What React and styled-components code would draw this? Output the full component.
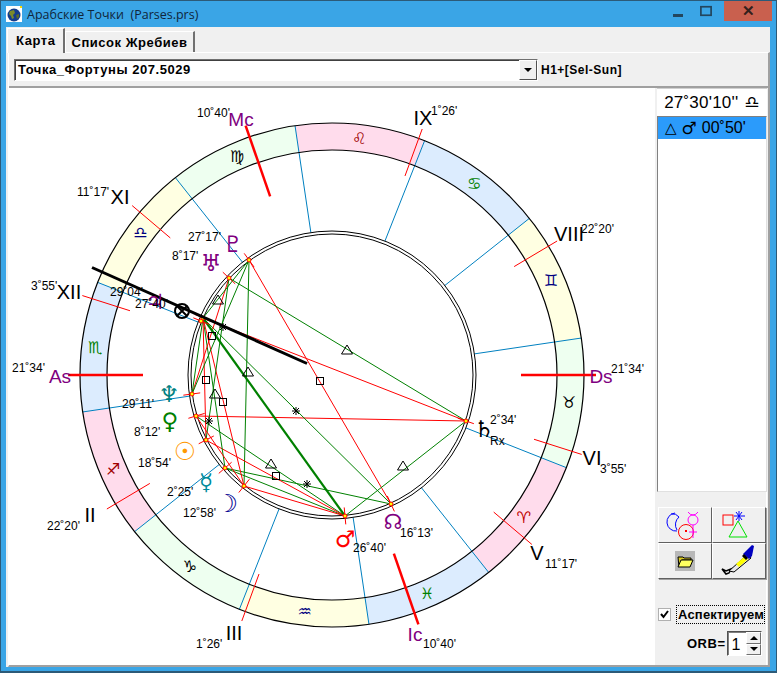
import React from "react";
import styled, { createGlobalStyle } from "styled-components";

const CX = 332;
const CY = 376;
const R_OUT = 252;
const R_IN = 225;
const ASC = 231.567;

const polar = (r, deg) => {
  const a = (deg * Math.PI) / 180;
  return [CX + r * Math.cos(a), CY - r * Math.sin(a)];
};
const screenAngle = (lon) => lon - ASC + 180;

const SIGNS = [
  ["♈", "#c00000", "#ffdcec"],
  ["♉", "#000000", "#eefff0"],
  ["♊", "#000080", "#ffffe2"],
  ["♋", "#008000", "#dcecfe"],
  ["♌", "#a00000", "#ffdcec"],
  ["♍", "#000000", "#eefff0"],
  ["♎", "#000080", "#ffffe2"],
  ["♏", "#008000", "#dcecfe"],
  ["♐", "#a00000", "#ffdcec"],
  ["♑", "#000000", "#eefff0"],
  ["♒", "#000080", "#ffffe2"],
  ["♓", "#008000", "#dcecfe"],
];

const CUSPS = [
  { lon: 231.567, thick: true },
  { lon: 262.33 },
  { lon: 301.43 },
  { lon: 340.67, thick: true },
  { lon: 11.28 },
  { lon: 33.92 },
  { lon: 51.567, thick: true },
  { lon: 82.33 },
  { lon: 121.43 },
  { lon: 160.67, thick: true },
  { lon: 191.28 },
  { lon: 213.92 },
];

const HOUSE_LABELS = [
  ["Mc", 241, 127, true],
  ["IX", 423, 126],
  ["VIII", 569, 242],
  ["Ds", 601, 384, true],
  ["VI", 592, 466],
  ["V", 537, 561],
  ["Ic", 415, 642, true],
  ["III", 234, 641],
  ["II", 90, 523],
  ["As", 60, 384, true],
  ["XII", 69, 300],
  ["XI", 120, 205],
];

const DEGREE_LABELS = [
  ["10˚40'", 197, 118],
  ["1˚26'", 431, 116],
  ["22˚20'", 581, 234],
  ["21˚34'", 611, 374],
  ["3˚55'", 600, 474],
  ["11˚17'", 545, 569],
  ["10˚40'", 423, 649],
  ["1˚26'", 196, 649],
  ["22˚20'", 47, 531],
  ["21˚34'", 12, 373],
  ["3˚55'", 31, 291],
  ["11˚17'", 77, 197],
  ["27˚17'", 188, 242],
  ["8˚17'", 172, 261],
  ["29˚04'", 110, 297],
  ["27˚40'", 135, 309],
  ["29˚11'", 122, 409],
  ["8˚12'", 134, 437],
  ["18˚54'", 138, 468],
  ["2˚25'", 167, 497],
  ["12˚58'", 183, 518],
  ["26˚40'", 353, 553],
  ["16˚13'", 400, 538],
  ["2˚34'", 490, 425],
];

const P = {
  pluto: [249, 261],
  uranus: [229, 279],
  jupiter: [201, 322],
  fortune: [203, 319],
  neptune: [192, 395],
  venus: [196, 417],
  sun: [206, 441],
  mercury: [225, 469],
  moon: [244, 487],
  mars: [345, 517],
  node: [391, 505],
  saturn: [466, 422],
};

const PLANETS = [
  ["♇", 233, 253, "#800080", 23],
  ["♅", 211, 272, "#800080", 23],
  ["♃", 155, 310, "#800080", 21],
  ["♆", 169, 403, "#008080", 23],
  ["♀", 170, 430, "#008000", 23],
  ["☉", 185, 461, "#ff9900", 25],
  ["☿", 206, 491, "#008b9b", 23],
  ["☽", 227, 513, "#000090", 25],
  ["♂", 345, 548, "#ff0000", 23],
  ["☊", 393, 530, "#800080", 21],
  ["♄", 484, 438, "#000000", 23],
];

const ASPECTS = [
  ["pluto", "node", "red"],
  ["uranus", "saturn", "green"],
  ["fortune", "saturn", "red"],
  ["venus", "saturn", "red"],
  ["fortune", "node", "green"],
  ["mars", "saturn", "green"],
  ["pluto", "moon", "green"],
  ["mercury", "node", "green"],
  ["mercury", "mars", "green"],
  ["venus", "mars", "green"],
  ["sun", "mars", "red"],
  ["fortune", "mercury", "green"],
  ["fortune", "moon", "red"],
  ["fortune", "sun", "red"],
  ["uranus", "neptune", "red"],
  ["pluto", "neptune", "green"],
  ["uranus", "sun", "green"],
  ["pluto", "fortune", "green"],
  ["venus", "moon", "red"],
  ["neptune", "fortune", "green"],
  ["moon", "mars", "red"],
];

const TRINES = [[218, 301], [347, 351], [403, 467], [248, 373], [271, 465], [215, 395]];
const SQUARES = [[320, 382], [212, 337], [206, 381], [223, 403], [276, 477]];
const STARS = [[296, 412], [307, 485], [223, 328], [209, 422]];

const GlobalStyle = createGlobalStyle`
  html, body {
    margin: 0;
    padding: 0;
    background: #fff;
    font-family: "Liberation Sans", Arial, sans-serif;
  }
`;

const Win = styled.div`
  box-sizing: border-box;
  width: 777px;
  height: 673px;
  display: flex;
  flex-direction: column;
  background: #3aa5e6;
  border: 1px solid #2c5a78;
  border-bottom-width: 2px;
`;

const TitleBar = styled.div`
  height: 26px;
  flex: none;
  display: flex;
  align-items: center;
  padding: 0 4px 0 5px;
  font: 12.5px "Open Sans", sans-serif;
  color: #10253a;
`;

const TitleText = styled.span`
  margin-left: 5px;
  flex: 1;
  white-space: pre;
`;

const CaptionBtn = styled.div`
  width: 28px;
  height: 20px;
  margin-top: -6px;
  display: flex;
  align-items: center;
  justify-content: center;
`;

const CloseBtn = styled(CaptionBtn)`
  width: 48px;
  margin-left: 4px;
  background: #c9604e;
  color: #33201c;
  font: bold 15px "Liberation Sans", sans-serif;
`;

const MinBar = styled.div`
  width: 10px;
  height: 3px;
  margin-top: 8px;
  background: #23465e;
`;

const MaxBox = styled.div`
  width: 10px;
  height: 8px;
  border: 2px solid #23465e;
  box-sizing: content-box;
  transform: scale(0.85);
`;

const Client = styled.div`
  flex: 1;
  min-height: 0;
  margin: 0 6px 4px 5px;
  background: #f0f0f0;
  display: flex;
  flex-direction: column;
`;

const TabStrip = styled.div`
  height: 25px;
  flex: none;
  display: flex;
  align-items: flex-end;
  padding-left: 1px;
`;

const Tab = styled.div`
  box-sizing: border-box;
  height: ${(p) => (p.$active ? "25px" : "21px")};
  margin-bottom: ${(p) => (p.$active ? "-1px" : "0")};
  padding: ${(p) => (p.$active ? "4px 8px 0 8px" : "3px 5px 0 5px")};
  background: #f0f0f0;
  border-top: 1px solid #fff;
  border-left: 1px solid #fff;
  border-right: 2px solid #707070;
  font: bold 13px "Liberation Sans", sans-serif;
  letter-spacing: 0.55px;
  color: #000;
  white-space: nowrap;
  position: relative;
  z-index: 1;
`;

const TabPanel = styled.div`
  flex: 1;
  min-height: 0;
  display: flex;
  flex-direction: column;
  border-top: 1px solid #fff;
  border-left: 1px solid #fff;
  border-right: 2px solid #a0a0a0;
  border-bottom: 2px solid #a0a0a0;
  margin-left: 2px;
`;

const ComboRow = styled.div`
  height: 35px;
  flex: none;
  display: flex;
  align-items: center;
  padding-left: 5px;
  border-bottom: 2px solid #a0a0a0;
  box-sizing: border-box;
`;

const Combo = styled.div`
  box-sizing: border-box;
  width: 524px;
  height: 22px;
  margin-top: 1px;
  display: flex;
  background: #fff;
  border: 1px solid;
  border-color: #707070 #fff #fff #707070;
  box-shadow: inset 1px 1px 0 #404040;
`;

const ComboText = styled.div`
  flex: 1;
  padding: 2px 0 0 3px;
  font: bold 13px "Liberation Sans", sans-serif;
  letter-spacing: 0.55px;
`;

const ComboArrow = styled.div`
  width: 16px;
  display: flex;
  align-items: center;
  justify-content: center;
  background: #f0f0f0;
  border: 1px solid;
  border-color: #fff #505050 #505050 #fff;
  &::after {
    content: "";
    border-top: 4px solid #000;
    border-left: 4px solid transparent;
    border-right: 4px solid transparent;
  }
`;

const Formula = styled.div`
  margin-left: 3px;
  font: bold 12px "Liberation Sans", sans-serif;
  letter-spacing: 0.5px;
`;

const Body = styled.div`
  flex: 1;
  min-height: 0;
  display: flex;
`;

const ChartArea = styled.div`
  width: 646px;
  flex: none;
  background: #fff;
  svg {
    display: block;
  }
`;

const Side = styled.div`
  flex: 1;
  min-width: 0;
  display: flex;
  flex-direction: column;
  margin-left: 2px;
  margin-right: 1px;
`;

const DegreeBox = styled.div`
  box-sizing: border-box;
  height: 28px;
  flex: none;
  display: flex;
  align-items: center;
  justify-content: center;
  gap: 6px;
  background: #fff;
  border-top: 1px solid #d0d0d0;
  font: 17px "Liberation Sans", sans-serif;
  letter-spacing: 0.2px;
`;

const AspectList = styled.div`
  box-sizing: border-box;
  flex: none;
  height: 376px;
  background: #fff;
  border: 1px solid;
  border-color: #808080 #e0e0e0 #e0e0e0 #808080;
`;

const AspectRow = styled.div`
  height: 22px;
  display: flex;
  align-items: center;
  gap: 5px;
  padding-left: 7px;
  background: #2b9bfb;
  font: 16px "Liberation Sans", sans-serif;
`;

const Glyph = styled.span`
  font-family: "DejaVu Sans", sans-serif;
  font-size: ${(p) => p.$size || 16}px;
  font-weight: bold;
  line-height: 1;
`;

const ToolPanel = styled.div`
  flex: 1;
  display: flex;
  flex-direction: column;
  padding: 15px 0 0 1px;
  border-right: 1px solid #fff;
`;

const ToolGrid = styled.div`
  display: grid;
  grid-template-columns: 54px 54px;
  grid-auto-rows: 36px;
`;

const ToolButton = styled.div`
  box-sizing: border-box;
  display: flex;
  align-items: center;
  justify-content: center;
  background: #f0f0f0;
  border: 1px solid;
  border-color: #fff #606060 #606060 #fff;
  box-shadow: 1px 1px 0 #a0a0a0;
`;

const CheckRow = styled.div`
  display: flex;
  align-items: center;
  margin-top: 26px;
`;

const CheckBox = styled.div`
  box-sizing: border-box;
  width: 13px;
  height: 13px;
  display: flex;
  align-items: center;
  justify-content: center;
  background: #fff;
  border: 1px solid #b0b0b0;
`;

const CheckLabel = styled.div`
  margin-left: 5px;
  padding: 1px 0 1px 1px;
  border: 1px dotted #000;
  font: bold 13px "Liberation Sans", sans-serif;
  letter-spacing: 0.2px;
  white-space: nowrap;
`;

const OrbRow = styled.div`
  display: flex;
  align-items: center;
  margin-top: 7px;
  padding-left: 29px;
  font: bold 13px "Liberation Sans", sans-serif;
  letter-spacing: 0.5px;
`;

const OrbField = styled.div`
  box-sizing: border-box;
  width: 35px;
  height: 25px;
  margin-left: 2px;
  display: flex;
  background: #fff;
  border: 1px solid;
  border-color: #505050 #fff #fff #505050;
  box-shadow: inset 1px 1px 0 #808080;
`;

const OrbValue = styled.div`
  flex: 1;
  padding: 4px 0 0 3px;
  font: 16px "Liberation Sans", sans-serif;
`;

const SpinCol = styled.div`
  width: 15px;
  display: flex;
  flex-direction: column;
`;

const SpinBtn = styled.div`
  flex: 1;
  display: flex;
  align-items: center;
  justify-content: center;
  background: #f0f0f0;
  border: 1px solid;
  border-color: #fff #707070 #707070 #fff;
  &::after {
    content: "";
    border-left: 4px solid transparent;
    border-right: 4px solid transparent;
    border-${(p) => (p.$up ? "bottom" : "top")}: 4px solid #000;
  }
`;

const SignText = styled.text`
  font-family: "DejaVu Sans", sans-serif;
  font-size: 16px;
  text-anchor: middle;
  dominant-baseline: central;
  fill: ${(p) => p.$color};
`;

const HouseText = styled.text`
  font-family: "Liberation Sans", sans-serif;
  font-size: ${(p) => (p.$angle ? 19 : 20)}px;
  font-stretch: condensed;
  text-anchor: middle;
  fill: ${(p) => (p.$angle ? "#800080" : "#000")};
`;

const DegreeText = styled.text`
  font-family: "Liberation Sans", sans-serif;
  font-size: 12px;
  fill: #000;
`;

const PlanetText = styled.text`
  font-family: "DejaVu Sans", sans-serif;
  font-size: ${(p) => p.$size}px;
  font-weight: bold;
  text-anchor: middle;
  fill: ${(p) => p.$color};
`;

function sectorPath(from, to) {
  const [ax, ay] = polar(R_OUT, from);
  const [bx, by] = polar(R_OUT, to);
  const [cx, cy] = polar(R_IN, to);
  const [dx, dy] = polar(R_IN, from);
  return `M${ax} ${ay}A${R_OUT} ${R_OUT} 0 0 0 ${bx} ${by}L${cx} ${cy}A${R_IN} ${R_IN} 0 0 1 ${dx} ${dy}Z`;
}

function Chart() {
  return (
    <svg width="646" height="574" viewBox="9 89 646 574">
      {SIGNS.map((s, i) => {
        const from = screenAngle(i * 30);
        return <path key={i} d={sectorPath(from, from + 30)} fill={s[2]} stroke="none" />;
      })}
      {SIGNS.map((s, i) => {
        const a = screenAngle(i * 30);
        const [x1, y1] = polar(144, a);
        const [x2, y2] = polar(R_OUT, a);
        return <line key={i} x1={x1} y1={y1} x2={x2} y2={y2} stroke="#0080c0" strokeWidth="1" />;
      })}
      <circle cx={CX} cy={CY} r={R_OUT} fill="none" stroke="#000" strokeWidth="1.2" />
      <circle cx={CX} cy={CY} r={R_IN} fill="none" stroke="#000" strokeWidth="1.2" />
      <circle cx={CX} cy={CY} r={144} fill="none" stroke="#000" strokeWidth="1" />
      <circle cx={CX} cy={CY} r={141} fill="none" stroke="#000" strokeWidth="1" />
      {SIGNS.map((s, i) => {
        const [x, y] = polar(238.5, screenAngle(i * 30 + 15));
        return (
          <SignText key={i} x={x} y={y} $color={s[1]}>
            {s[0]}
            {"\uFE0E"}
          </SignText>
        );
      })}
      {CUSPS.map((c, i) => {
        const a = screenAngle(c.lon);
        const [x1, y1] = polar(c.thick ? 189 : 212, a);
        const [x2, y2] = polar(c.thick ? 264 : 262, a);
        return (
          <line key={i} x1={x1} y1={y1} x2={x2} y2={y2} stroke="#ff0000" strokeWidth={c.thick ? 2.5 : 1} />
        );
      })}
      {ASPECTS.map(([a, b, color], i) => (
        <line
          key={i}
          x1={P[a][0]}
          y1={P[a][1]}
          x2={P[b][0]}
          y2={P[b][1]}
          stroke={color === "red" ? "#ff0000" : "#008000"}
          strokeWidth="1"
        />
      ))}
      <line x1={P.fortune[0]} y1={P.fortune[1]} x2={P.mars[0]} y2={P.mars[1]} stroke="#008000" strokeWidth="2.2" />
      {TRINES.map(([x, y], i) => (
        <path key={i} d={`M${x} ${y - 5}L${x + 5.5} ${y + 4}H${x - 5.5}Z`} fill="none" stroke="#000" />
      ))}
      {SQUARES.map(([x, y], i) => (
        <rect key={i} x={x - 3.5} y={y - 3.5} width="7" height="7" fill="none" stroke="#000" />
      ))}
      {STARS.map(([x, y], i) => (
        <path
          key={i}
          d={`M${x} ${y - 4}V${y + 4}M${x - 4} ${y}H${x + 4}M${x - 3} ${y - 3}L${x + 3} ${y + 3}M${x + 3} ${y - 3}L${x - 3} ${y + 3}`}
          stroke="#000"
        />
      ))}
      {Object.values(P).map(([x, y], i) => {
        const a = (Math.atan2(CY - y, x - CX) * 180) / Math.PI;
        const [x1, y1] = polar(133, a);
        const [x2, y2] = polar(150, a);
        return (
          <g key={i}>
            <line x1={x1} y1={y1} x2={x2} y2={y2} stroke="#ff0000" />
            <circle cx={x} cy={y} r="2" fill="#ffff00" stroke="#ff0000" />
          </g>
        );
      })}
      <line x1="92" y1="268.5" x2="307" y2="364.5" stroke="#000" strokeWidth="3" />
      <circle cx="182" cy="312" r="7" fill="none" stroke="#000" strokeWidth="2" />
      <path d="M177 307l10 10M187 307l-10 10" stroke="#000" strokeWidth="2" />
      {PLANETS.map(([g, x, y, color, size], i) => (
        <PlanetText key={i} x={x} y={y} $color={color} $size={size}>
          {g}
          {"\uFE0E"}
        </PlanetText>
      ))}
      <DegreeText x="490" y="446">Rx</DegreeText>
      {HOUSE_LABELS.map(([t, x, y, angle]) => (
        <HouseText key={t} x={x} y={y} $angle={angle}>
          {t}
        </HouseText>
      ))}
      {DEGREE_LABELS.map(([t, x, y], i) => (
        <DegreeText key={i} x={x} y={y}>
          {t}
        </DegreeText>
      ))}
    </svg>
  );
}

const GlobeIcon = () => (
  <svg width="16" height="16" viewBox="0 0 16 16">
    <rect width="16" height="16" fill="#fff" />
    <rect x="14" width="2" height="2" fill="#ffd800" />
    <circle cx="8" cy="9" r="6.5" fill="#143c8c" />
    <path d="M4 5l4-1 1 3-2 2 1 3-2 1-1-3-2-2z" fill="#7a8a2a" />
    <path d="M10 9l3-1 0 3-2 2z" fill="#5a6a2a" />
  </svg>
);

const ConjunctionIcon = () => (
  <svg width="40" height="30" viewBox="0 0 40 30" fill="none">
    <path d="M10 3a9 9 0 1 0 2 18M6 4a8 8 0 0 1 8 3 10 10 0 0 0-2 13" stroke="#0000ff" />
    <circle cx="23" cy="5" r="0.1" />
    <circle cx="21" cy="22" r="7.5" stroke="#ff0000" />
    <rect x="20" y="20" width="2" height="2" fill="#ff0000" />
    <circle cx="28" cy="10" r="5" stroke="#ff00ff" />
    <path d="M23 2q2 3 5 3t5-3M28 15v13M24 22h8" stroke="#ff00ff" />
  </svg>
);

const AspectIcon = () => (
  <svg width="40" height="30" viewBox="0 0 40 30" fill="none">
    <rect x="4" y="5" width="10" height="10" stroke="#ff0000" />
    <path d="M20 1v10M15 6h11M17 2l6 8M23 2l-6 8" stroke="#0000ff" />
    <path d="M10 27L19 11l9 16z" stroke="#00e000" />
  </svg>
);

const FolderIcon = () => (
  <svg width="20" height="20" viewBox="0 0 20 20">
    <rect width="20" height="20" fill="#b8b8b8" />
    <path d="M3 6h5l1 1h7v2H7l-3 7z" fill="#d8c820" stroke="#000" />
    <path d="M3 16l3-7h12l-3 7z" fill="#ffff60" stroke="#000" />
  </svg>
);

const PenIcon = () => (
  <svg width="42" height="34" viewBox="0 0 42 34">
    <path d="M4 25l4 2 5-2-2 4-3 1z" fill="none" stroke="#000" strokeWidth="1.5" />
    <path d="M11 27L30 10l3 4-17 14z" fill="#e8e8e8" stroke="#000" />
    <path d="M18 20l9-8 3 3-9 8z" fill="#ffff00" />
    <path d="M25 10l9-9 2 1-2 10-3 3z" fill="#0000c0" />
    <path d="M26 10l4 4-2 2-4-4z" fill="#000" />
  </svg>
);

export default function App() {
  return (
    <>
      <GlobalStyle />
      <Win>
        <TitleBar>
          <GlobeIcon />
          <TitleText>Арабские Точки  (Parses.prs)</TitleText>
          <CaptionBtn><MinBar /></CaptionBtn>
          <CaptionBtn><MaxBox /></CaptionBtn>
          <CloseBtn>✕</CloseBtn>
        </TitleBar>
        <Client>
          <TabStrip>
            <Tab $active>Карта</Tab>
            <Tab>Список Жребиев</Tab>
          </TabStrip>
          <TabPanel>
            <ComboRow>
              <Combo>
                <ComboText>Точка_Фортуны 207.5029</ComboText>
                <ComboArrow />
              </Combo>
              <Formula>H1+[Sel-Sun]</Formula>
            </ComboRow>
            <Body>
              <ChartArea>
                <Chart />
              </ChartArea>
              <Side>
                <DegreeBox>
                  <span>27˚30'10''</span>
                  <Glyph $size={17}>♎{"\uFE0E"}</Glyph>
                </DegreeBox>
                <AspectList>
                  <AspectRow>
                    <Glyph $size={15}>△</Glyph>
                    <Glyph $size={17}>♂{"\uFE0E"}</Glyph>
                    <span>00˚50'</span>
                  </AspectRow>
                </AspectList>
                <ToolPanel>
                  <ToolGrid>
                    <ToolButton><ConjunctionIcon /></ToolButton>
                    <ToolButton><AspectIcon /></ToolButton>
                    <ToolButton><FolderIcon /></ToolButton>
                    <ToolButton><PenIcon /></ToolButton>
                  </ToolGrid>
                  <CheckRow>
                    <CheckBox>
                      <svg width="9" height="9" viewBox="0 0 9 9">
                        <path d="M1 4l2.5 3L8 1" fill="none" stroke="#000" strokeWidth="2" />
                      </svg>
                    </CheckBox>
                    <CheckLabel>Аспектируем</CheckLabel>
                  </CheckRow>
                  <OrbRow>
                    ORB=
                    <OrbField>
                      <OrbValue>1</OrbValue>
                      <SpinCol>
                        <SpinBtn $up />
                        <SpinBtn />
                      </SpinCol>
                    </OrbField>
                  </OrbRow>
                </ToolPanel>
              </Side>
            </Body>
          </TabPanel>
        </Client>
      </Win>
    </>
  );
}
